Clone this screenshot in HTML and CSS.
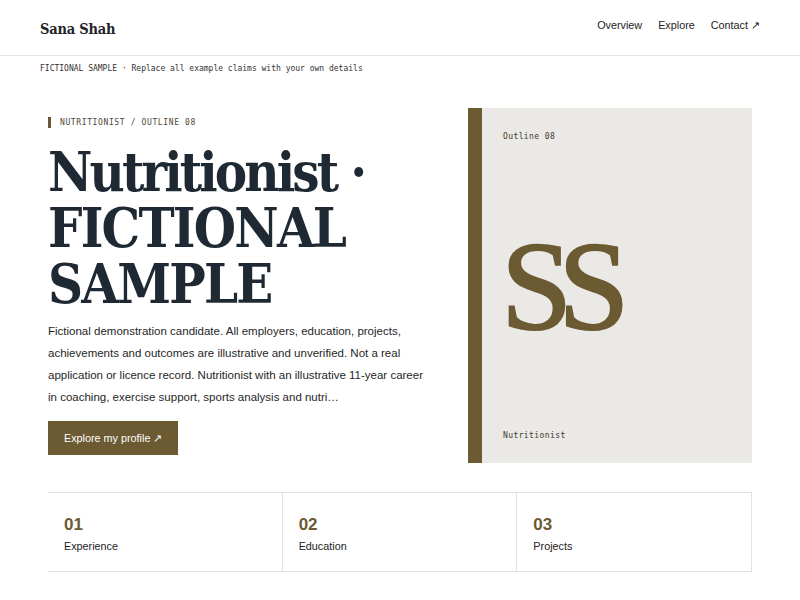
FILE: index.html
```html
<!DOCTYPE html>
<html lang="en">
<head>
<meta charset="utf-8">
<title>Sana Shah</title>
<link rel="stylesheet" href="styles.css">
</head>
<body>
<header class="site-header">
  <div class="brand">Sana Shah</div>
  <nav class="nav">
    <a href="#">Overview</a>
    <a href="#">Explore</a>
    <a href="#">Contact ↗</a>
  </nav>
</header>
<div class="notice">FICTIONAL SAMPLE · Replace all example claims with your own details</div>
<main class="main">
  <section class="hero">
    <div class="hero-copy">
      <div class="eyebrow">NUTRITIONIST / OUTLINE 08</div>
      <h1 class="title"><span class="title-lead">Nutritionist ·</span> FICTIONAL SAMPLE</h1>
      <p class="lede">Fictional demonstration candidate. All employers, education, projects, achievements and outcomes are illustrative and unverified. Not a real application or licence record. Nutritionist with an illustrative 11-year career in coaching, exercise support, sports analysis and nutri…</p>
      <a class="btn" href="#">Explore my profile ↗</a>
    </div>
    <div class="art">
      <div class="art-top">Outline 08</div>
      <div class="art-mono">SS</div>
      <div class="art-bottom">Nutritionist</div>
    </div>
  </section>
  <section class="stats">
    <div class="stat"><div class="num">01</div><div class="label">Experience</div></div>
    <div class="stat"><div class="num">02</div><div class="label">Education</div></div>
    <div class="stat"><div class="num">03</div><div class="label">Projects</div></div>
  </section>
</main>
</body>
</html>
```
FILE: styles.css
```css
* { box-sizing: border-box; }
html, body { margin: 0; padding: 0; background: #fff; }
body {
  font-family: "Liberation Sans", Arial, sans-serif;
  color: #1f2328;
}
a { color: inherit; text-decoration: none; }

.site-header {
  height: 56px;
  padding: 0 40px;
  display: flex;
  align-items: center;
  justify-content: space-between;
  border-bottom: 1px solid #e4e4e4;
}
.brand {
  font-family: "DejaVu Serif Condensed", "DejaVu Serif", Georgia, serif;
  font-stretch: condensed;
  font-weight: bold;
  font-size: 14.5px;
  letter-spacing: -0.2px;
  color: #1f2328;
  padding-top: 1px;
}
.nav {
  display: flex;
  gap: 16px;
  font-size: 10.8px;
  color: #222;
  padding-bottom: 4px;
}

.notice {
  padding: 8px 40px 0;
  height: 24px;
  font-family: "DejaVu Sans Mono", "Liberation Mono", monospace;
  font-size: 8px;
  color: #333;
}

.main { padding: 28px 48px 0; }

.hero {
  display: grid;
  grid-template-columns: 1fr 284px;
  gap: 40px;
  align-items: center;
}
.hero-copy {
  display: flex;
  flex-direction: column;
  align-items: flex-start;
}
.eyebrow {
  border-left: 3px solid #6b5a32;
  padding-left: 9px;
  font-family: "DejaVu Sans Mono", "Liberation Mono", monospace;
  font-size: 8px;
  letter-spacing: 0.62px;
  line-height: 11px;
  color: #4d4535;
}
.title {
  margin: 16px 0 0;
  font-family: "DejaVu Serif Condensed", "DejaVu Serif", Georgia, serif;
  font-stretch: condensed;
  font-weight: bold;
  font-size: 54px;
  line-height: 56px;
  letter-spacing: -1.8px;
  color: #1f2933;
}
.title-lead { letter-spacing: -2.9px; }
.lede {
  margin: 8px 0 0;
  max-width: 376px;
  font-size: 11.5px;
  line-height: 22px;
  color: #262626;
}
.btn {
  margin-top: 13px;
  background: #6b5a32;
  color: #fff;
  font-size: 10.8px;
  line-height: 34px;
  padding: 0 16px;
}

.art {
  height: 355px;
  background: #ebe9e5;
  border-left: 14px solid #6b5a32;
  display: flex;
  flex-direction: column;
  justify-content: space-between;
  padding: 23px 21px 22px;
}
.art-top, .art-bottom {
  font-family: "DejaVu Sans Mono", "Liberation Mono", monospace;
  font-size: 8px;
  letter-spacing: 0.4px;
  line-height: 11px;
  color: #3e3a30;
}
.art-mono {
  font-family: "Liberation Serif", "Times New Roman", serif;
  font-size: 128px;
  line-height: 1;
  letter-spacing: -14px;
  color: #6b5a32;
  -webkit-text-stroke: 2px #6b5a32;
  margin-left: -2px;
}

.stats {
  margin-top: 29px;
  display: grid;
  grid-template-columns: repeat(3, 1fr);
  border-top: 1px solid #e2e2e2;
  border-bottom: 1px solid #e2e2e2;
}
.stat {
  border-right: 1px solid #e2e2e2;
  padding: 21px 16px 0;
  height: 78px;
}
.num {
  font-size: 17px;
  font-weight: bold;
  color: #6b5a32;
  line-height: 22px;
}
.label {
  margin-top: 4px;
  font-size: 10.8px;
  color: #222;
}
```
